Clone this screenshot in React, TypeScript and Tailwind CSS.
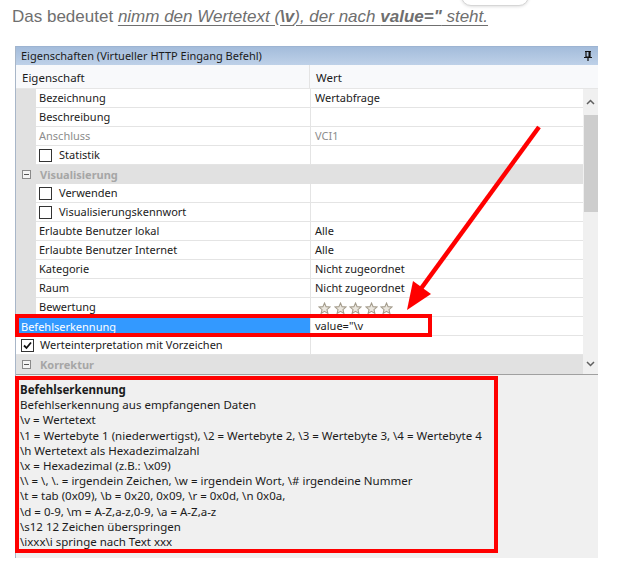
import React from "react";

const ui = { fontFamily: '"Noto Sans", "Open Sans", sans-serif' };

type Row =
  | { kind: "prop"; name: string; value?: string; muted?: boolean; check?: boolean }
  | { kind: "cat"; name: string }
  | { kind: "stars"; name: string }
  | { kind: "selected"; name: string; value: string }
  | { kind: "checked"; name: string };

const rows: Row[] = [
  { kind: "prop", name: "Bezeichnung", value: "Wertabfrage" },
  { kind: "prop", name: "Beschreibung" },
  { kind: "prop", name: "Anschluss", value: "VCI1", muted: true },
  { kind: "prop", name: "Statistik", check: true },
  { kind: "cat", name: "Visualisierung" },
  { kind: "prop", name: "Verwenden", check: true },
  { kind: "prop", name: "Visualisierungskennwort", check: true },
  { kind: "prop", name: "Erlaubte Benutzer lokal", value: "Alle" },
  { kind: "prop", name: "Erlaubte Benutzer Internet", value: "Alle" },
  { kind: "prop", name: "Kategorie", value: "Nicht zugeordnet" },
  { kind: "prop", name: "Raum", value: "Nicht zugeordnet" },
  { kind: "stars", name: "Bewertung" },
  { kind: "selected", name: "Befehlserkennung", value: String.raw`value="\v` },
  { kind: "checked", name: "Werteinterpretation mit Vorzeichen" },
  { kind: "cat", name: "Korrektur" },
];

const helpLines = [
  String.raw`Befehlserkennung aus empfangenen Daten`,
  String.raw`\v = Wertetext`,
  String.raw`\1 = Wertebyte 1 (niederwertigst), \2 = Wertebyte 2, \3 = Wertebyte 3, \4 = Wertebyte 4`,
  String.raw`\h Wertetext als Hexadezimalzahl`,
  String.raw`\x = Hexadezimal (z.B.: \x09)`,
  String.raw`\\ = \, \. = irgendein Zeichen, \w = irgendein Wort, \# irgendeine Nummer`,
  String.raw`\t = tab (0x09), \b = 0x20, 0x09, \r = 0x0d, \n 0x0a,`,
  String.raw`\d = 0-9, \m = A-Z,a-z,0-9, \a = A-Z,a-z`,
  String.raw`\s12 12 Zeichen überspringen`,
  String.raw`\ixxx\i springe nach Text xxx`,
];

function Checkbox({ checked }: { checked?: boolean }) {
  return (
    <span className="w-[13px] h-[13px] border border-[#333] bg-white flex items-center justify-center shrink-0">
      {checked && (
        <svg width="9" height="9" viewBox="0 0 9 9">
          <path d="M1 4.5 L3.5 7 L8 1.5" fill="none" stroke="#111" strokeWidth="1.8" />
        </svg>
      )}
    </span>
  );
}

function Star() {
  return (
    <svg width="13" height="13" viewBox="0 0 24 24">
      <path
        d="M12 2 L14.9 8.6 L22 9.3 L16.6 14 L18.2 21 L12 17.3 L5.8 21 L7.4 14 L2 9.3 L9.1 8.6 Z"
        fill="#ebe7df"
        stroke="#a49c8c"
        strokeWidth="2"
      />
    </svg>
  );
}

function MinusBox() {
  return (
    <span className="w-[9px] h-[9px] border border-[#8a8a8a] bg-[#f4f4f4] flex items-center justify-center">
      <span className="w-[5px] h-px bg-[#555]" />
    </span>
  );
}

function GridRow({ row }: { row: Row }) {
  if (row.kind === "cat") {
    return (
      <div className="h-[19px] flex items-center bg-[#e1e1e1]">
        <div className="w-[20px] flex justify-center pl-[1px]">
          <MinusBox />
        </div>
        <span className="pl-[4px] pt-[1px] font-bold text-[#a6a6a6]">{row.name}</span>
      </div>
    );
  }
  if (row.kind === "selected") {
    return (
      <div className="h-[19px] flex">
        <div className="w-[294px] bg-[#3399ff] text-white pl-[5px] pt-[1px] flex items-center">{row.name}</div>
        <div className="flex-1 border-b border-l border-[#e4e4e4] pl-[4px] pt-[1px] flex items-center bg-white">{row.value}</div>
      </div>
    );
  }
  if (row.kind === "checked") {
    return (
      <div className="h-[19px] flex bg-white">
        <div className="w-[294px] flex items-center gap-[6px] pl-[5px] border-b border-[#e4e4e4]">
          <Checkbox checked />
          <span className="pt-[1px]">{row.name}</span>
        </div>
        <div className="flex-1 border-b border-l border-[#e4e4e4]" />
      </div>
    );
  }
  return (
    <div className="h-[19px] flex">
      <div className="w-[20px] bg-[#e1e1e1]" />
      <div className="w-[274px] flex items-center gap-[7px] pl-[3px] border-b border-[#e4e4e4] bg-white">
        {row.kind === "prop" && row.check && <Checkbox />}
        <span className={`pt-[1px] ${row.kind === "prop" && row.muted ? "text-[#8d8d8d]" : ""}`}>{row.name}</span>
      </div>
      <div className="flex-1 border-b border-l border-[#e4e4e4] bg-white pl-[4px] flex items-center">
        {row.kind === "stars" ? (
          <div className="flex gap-[2.5px] pl-[3px] pt-[2px]">
            <Star />
            <Star />
            <Star />
            <Star />
            <Star />
          </div>
        ) : (
          <span className={`pt-[1px] ${row.kind === "prop" && row.muted ? "text-[#8d8d8d]" : ""}`}>
            {row.kind === "prop" ? row.value : ""}
          </span>
        )}
      </div>
    </div>
  );
}

export default function App() {
  return (
    <div className="relative w-[621px] h-[563px] bg-white overflow-hidden">
      {/* bubble peeking from above */}
      <div className="absolute left-[461px] top-[-20px] w-[68px] h-[26px] rounded-b-[10px] border border-[#d6d6d6] bg-white shadow-[0_1px_3px_rgba(0,0,0,0.12)]" />

      <p
        className="pl-[12px] pt-[4px] h-[46px] text-[17px] text-[#6f6f6f]"
        style={{ fontFamily: '"Liberation Sans", Arial, sans-serif' }}
      >
        Das bedeutet{" "}
        <span className="italic underline underline-offset-[3px]">
          nimm den Wertetext (<b>\v</b>), der nach <b>value="</b> steht.
        </span>
      </p>

      <div className="ml-[15px] w-[583px] border-l border-[#a8b6c8] text-[11px] text-[#1b1b1b]" style={ui}>
        {/* title bar */}
        <div className="h-[19px] flex items-center justify-between pl-[5px] pr-[6px] bg-gradient-to-b from-[#a3bcdb] to-[#bed1e8] border-t border-[#9db4d2]">
          <span className="pt-[1px]">Eigenschaften (Virtueller HTTP Eingang Befehl)</span>
          <svg width="8" height="10" viewBox="0 0 8 10">
            <path d="M1 0.5 H7 M2 0.5 V6 H6 V0.5 M0 6.5 H8 M4 6.5 V10" fill="none" stroke="#111" strokeWidth="1.2" />
            <rect x="4.5" y="1" width="1.5" height="5" fill="#111" />
          </svg>
        </div>

        {/* header */}
        <div className="h-[24px] flex items-center bg-[#f8f9fb] border-b border-[#e6e6e6] text-[11.5px]">
          <div className="w-[294px] pl-[6px] pt-[2px] border-r border-[#e4e4e4] h-full flex items-center">Eigenschaft</div>
          <div className="pl-[6px] pt-[2px]">Wert</div>
        </div>

        {/* grid */}
        <div className="flex h-[285px]">
          <div className="w-[568px]">
            {rows.map((r, i) => (
              <GridRow key={i} row={r} />
            ))}
          </div>
          <div className="w-[15px] bg-[#f0f0f0] flex flex-col items-center">
            <div className="h-[26px] flex items-center justify-center">
              <svg width="9" height="6" viewBox="0 0 9 6">
                <path d="M1 5 L4.5 1.5 L8 5" fill="none" stroke="#606060" strokeWidth="1.5" />
              </svg>
            </div>
            <div className="w-[14px] h-[97px] bg-[#cdcdcd]" />
            <div className="flex-1" />
            <div className="h-[20px] flex items-center justify-center">
              <svg width="9" height="6" viewBox="0 0 9 6">
                <path d="M1 1 L4.5 4.5 L8 1" fill="none" stroke="#606060" strokeWidth="1.5" />
              </svg>
            </div>
          </div>
        </div>

        {/* description */}
        <div className="h-[184px] bg-[#f0f0f0] border-t border-[#a0a0a0] pt-[7px] pl-[4px] leading-[15.2px] text-[11.5px]">
          <div className="font-bold">Befehlserkennung</div>
          {helpLines.map((l, i) => (
            <div key={i} className="whitespace-pre">{l}</div>
          ))}
        </div>
      </div>

      {/* red annotations */}
      <div className="absolute left-[15px] top-[314px] w-[417px] h-[23px] border-[4px] border-[#ff0000]" />
      <div className="absolute left-[15px] top-[376px] w-[483px] h-[177px] border-[4px] border-[#ff0000]" />
      <svg className="absolute left-0 top-0 pointer-events-none" width="621" height="563">
        <line x1="539" y1="127" x2="420" y2="290" stroke="#ff0000" strokeWidth="4.5" />
        <polygon points="407,310 431,294 413,281" fill="#ff0000" />
      </svg>
    </div>
  );
}
